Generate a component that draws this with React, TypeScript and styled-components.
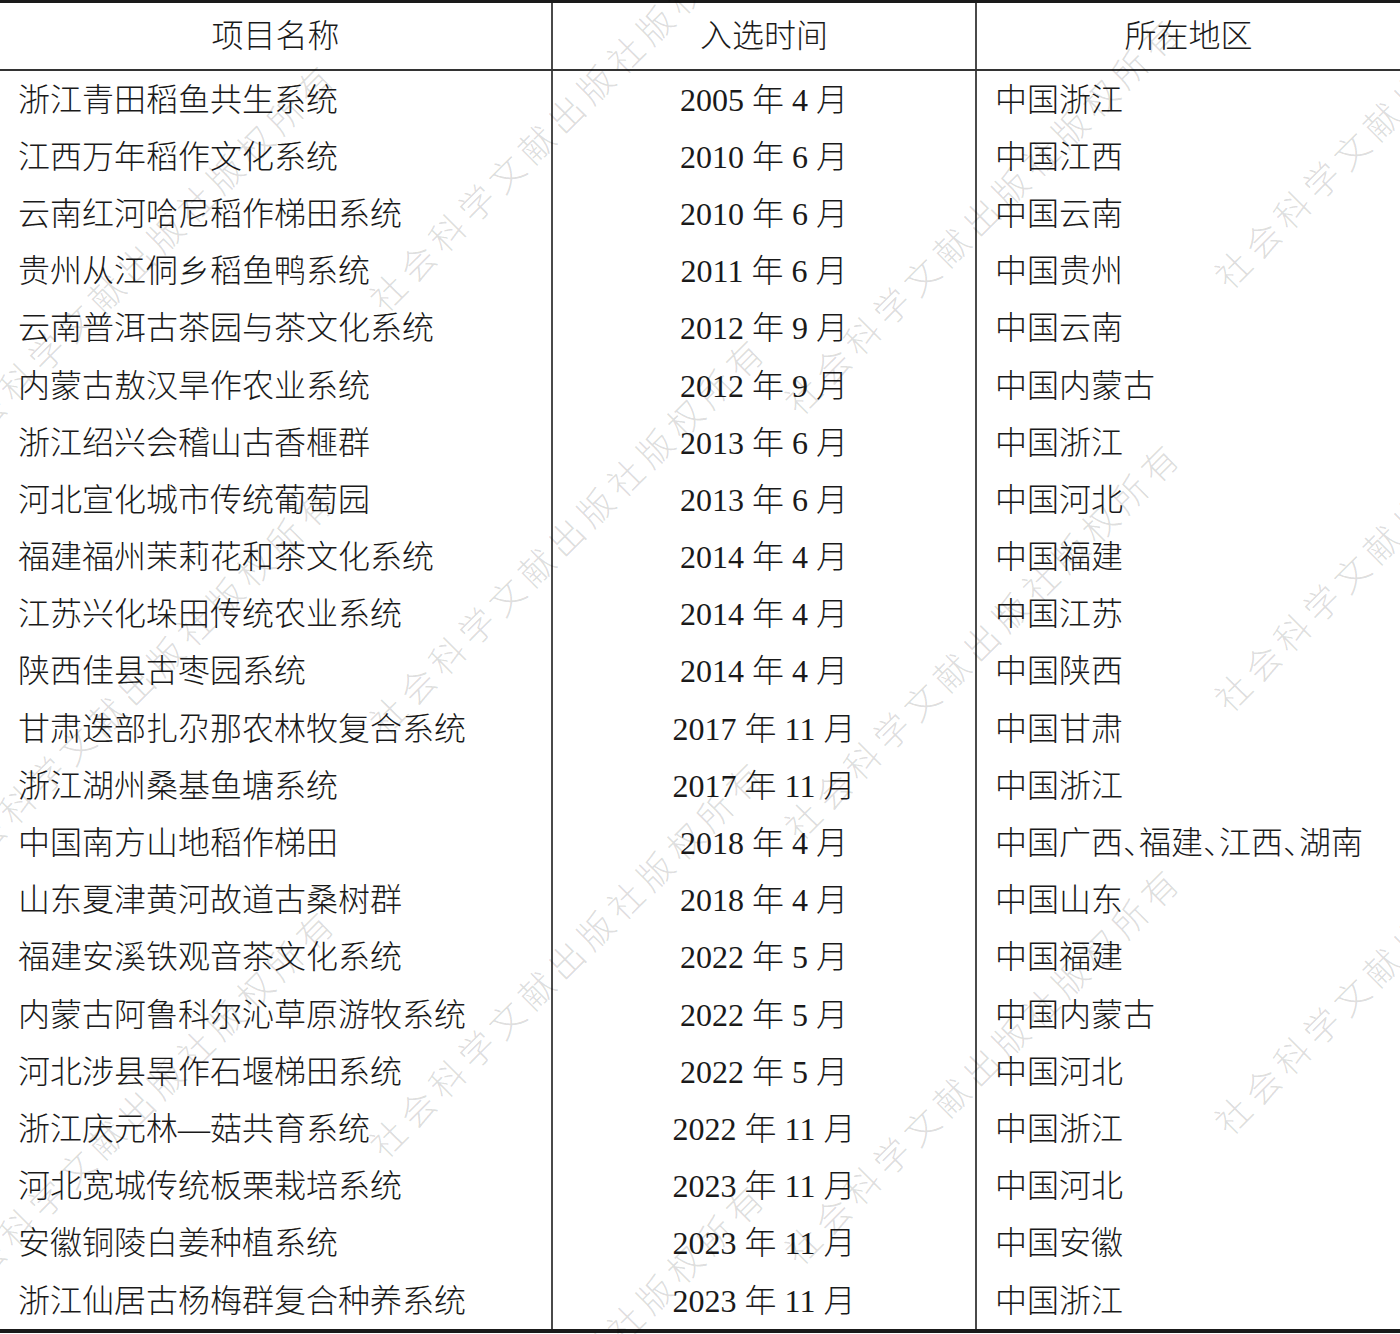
import styled, { createGlobalStyle } from "styled-components";

const GlobalStyle = createGlobalStyle`
  html, body {
    margin: 0;
    padding: 0;
    background: #fff;
  }
  body {
    font-family: "Liberation Serif", "Noto Sans CJK SC", serif;
    color: #1a1a1a;
  }
`;

const Page = styled.div`
  position: relative;
  width: 1400px;
  height: 1334px;
  overflow: hidden;
  background: #fff;
`;

const Table = styled.div`
  display: flex;
  flex-direction: column;
  border-top: 3px solid #1a1a1a;
  border-bottom: 4px solid #1a1a1a;
`;

const Row = styled.div<{ $head?: boolean }>`
  display: grid;
  grid-template-columns: 551px 424px 1fr;
  height: ${(p) => (p.$head ? "66px" : "57.2px")};
  border-bottom: ${(p) => (p.$head ? "2px solid #333" : "none")};
`;

const Cell = styled.div<{ $align: "left" | "center"; $first?: boolean }>`
  display: flex;
  align-items: center;
  justify-content: ${(p) => (p.$align === "center" ? "center" : "flex-start")};
  padding-left: ${(p) => (p.$align === "center" ? "0" : "18px")};
  border-left: ${(p) => (p.$first ? "none" : "2px solid #4a4a4a")};
  font-size: 32px;
  line-height: 1;
  font-weight: 300;
  white-space: nowrap;
  /* half-width 、 as set in the printed table */
  font-feature-settings: "halt";
`;

const WatermarkLayer = styled.div`
  position: absolute;
  inset: 0;
  pointer-events: none;
`;

const Mark = styled.span`
  position: absolute;
  transform-origin: 0 50%;
  transform: rotate(-45deg);
  font-family: "Noto Sans CJK SC", sans-serif;
  font-weight: 300;
  font-size: 35px;
  line-height: 35px;
  letter-spacing: 7px;
  color: rgba(0, 0, 0, 0.14);
  white-space: nowrap;
`;

const rows: [string, string, string][] = [
  ["浙江青田稻鱼共生系统", "2005 年 4 月", "中国浙江"],
  ["江西万年稻作文化系统", "2010 年 6 月", "中国江西"],
  ["云南红河哈尼稻作梯田系统", "2010 年 6 月", "中国云南"],
  ["贵州从江侗乡稻鱼鸭系统", "2011 年 6 月", "中国贵州"],
  ["云南普洱古茶园与茶文化系统", "2012 年 9 月", "中国云南"],
  ["内蒙古敖汉旱作农业系统", "2012 年 9 月", "中国内蒙古"],
  ["浙江绍兴会稽山古香榧群", "2013 年 6 月", "中国浙江"],
  ["河北宣化城市传统葡萄园", "2013 年 6 月", "中国河北"],
  ["福建福州茉莉花和茶文化系统", "2014 年 4 月", "中国福建"],
  ["江苏兴化垛田传统农业系统", "2014 年 4 月", "中国江苏"],
  ["陕西佳县古枣园系统", "2014 年 4 月", "中国陕西"],
  ["甘肃迭部扎尕那农林牧复合系统", "2017 年 11 月", "中国甘肃"],
  ["浙江湖州桑基鱼塘系统", "2017 年 11 月", "中国浙江"],
  ["中国南方山地稻作梯田", "2018 年 4 月", "中国广西、福建、江西、湖南"],
  ["山东夏津黄河故道古桑树群", "2018 年 4 月", "中国山东"],
  ["福建安溪铁观音茶文化系统", "2022 年 5 月", "中国福建"],
  ["内蒙古阿鲁科尔沁草原游牧系统", "2022 年 5 月", "中国内蒙古"],
  ["河北涉县旱作石堰梯田系统", "2022 年 5 月", "中国河北"],
  ["浙江庆元林—菇共育系统", "2022 年 11 月", "中国浙江"],
  ["河北宽城传统板栗栽培系统", "2023 年 11 月", "中国河北"],
  ["安徽铜陵白姜种植系统", "2023 年 11 月", "中国安徽"],
  ["浙江仙居古杨梅群复合种养系统", "2023 年 11 月", "中国浙江"],
];

// watermark anchors: centre of the first character
const marks: [number, number][] = [
  [-42, 16], [-42, 439], [-42, 862], [-42, 1285],
  [388, 290], [388, 713], [388, 1136], [388, 1559],
  [803, -30], [803, 393], [803, 818], [803, 1243],
  [1233, 267], [1233, 690], [1233, 1113], [1233, 1536],
];

export default function App() {
  return (
    <Page>
      <GlobalStyle />
      <Table>
        <Row $head>
          <Cell $align="center" $first>项目名称</Cell>
          <Cell $align="center">入选时间</Cell>
          <Cell $align="center">所在地区</Cell>
        </Row>
        {rows.map(([name, time, area], i) => (
          <Row key={i}>
            <Cell $align="left" $first>{name}</Cell>
            <Cell $align="center">{time}</Cell>
            <Cell $align="left">{area}</Cell>
          </Row>
        ))}
      </Table>
      <WatermarkLayer>
        {marks.map(([x, y], i) => (
          <Mark key={i} style={{ left: x - 14, top: y - 4 }}>
            社会科学文献出版社版权所有
          </Mark>
        ))}
      </WatermarkLayer>
    </Page>
  );
}
